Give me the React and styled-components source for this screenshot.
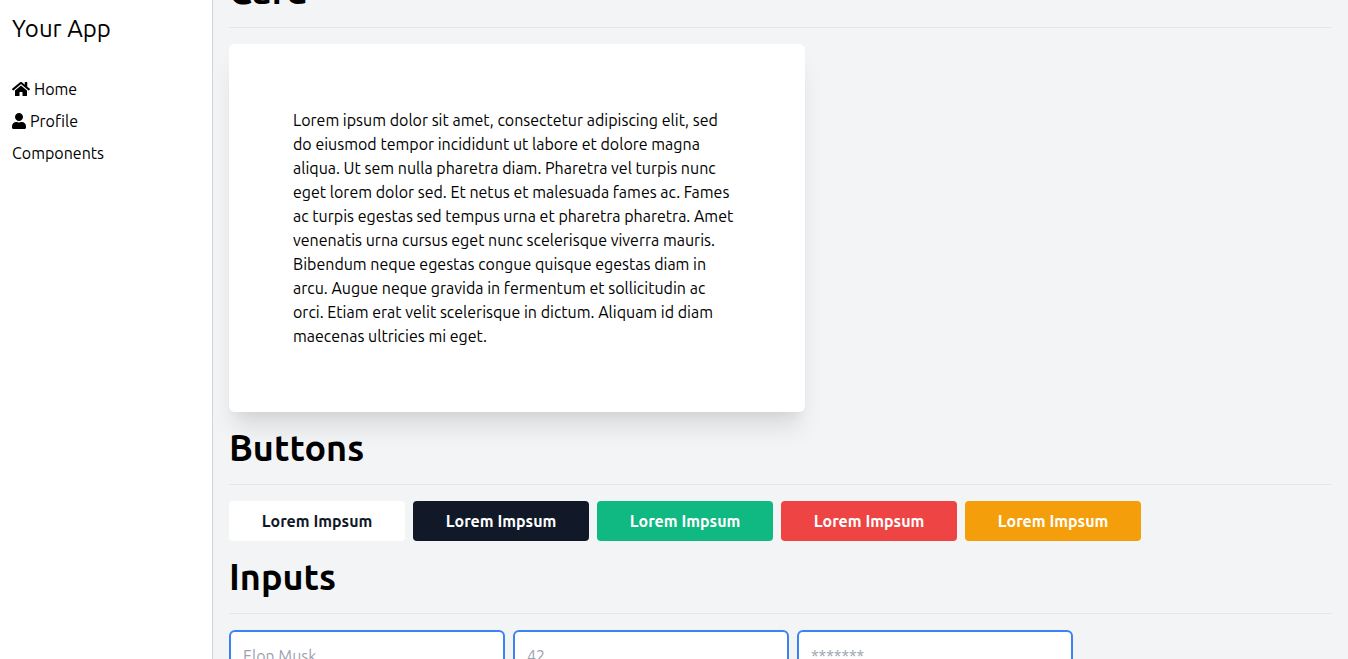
import React, { useLayoutEffect, useRef } from "react";
import styled, { createGlobalStyle } from "styled-components";
import { FaHome, FaUser } from "react-icons/fa";

const GlobalStyle = createGlobalStyle`
  *, *::before, *::after { box-sizing: border-box; }
  body {
    margin: 0;
    color: #000;
    font-family: Ubuntu, "Noto Sans", sans-serif;
    font-size: 16px;
    line-height: 24px;
  }
  h1, h2, p, ul { margin: 0; padding: 0; }
`;

const Shell = styled.div`
  display: flex;
  height: 100vh;
`;

const Sidebar = styled.aside`
  flex: 0 0 213px;
  padding: 12px;
  background: #fff;
  border-right: 1px solid #d1d5db;
`;

const Brand = styled.h1`
  font-size: 24px;
  font-weight: 400;
  line-height: 34px;
`;

const NavList = styled.ul`
  display: flex;
  flex-direction: column;
  gap: 8px;
  margin-top: 31px;
  list-style: none;
`;

const NavLink = styled.a`
  display: flex;
  align-items: center;
  gap: 4px;
  color: inherit;
  text-decoration: none;
`;

const HomeIcon = styled(FaHome)`
  width: 18px;
  height: 16px;
`;

const UserIcon = styled(FaUser)`
  width: 14px;
  height: 16px;
`;

const Main = styled.main`
  flex: 1;
  min-width: 0;
  padding: 16px;
  overflow-y: auto;
  scrollbar-width: none;
  background: #f3f4f6;
`;

const Section = styled.section`
  margin-bottom: 16px;
`;

const SectionTitle = styled.h2`
  margin-bottom: 16px;
  padding-bottom: 16px;
  border-bottom: 1px solid #e5e7eb;
  font-size: 36px;
  font-weight: 700;
  line-height: 40px;
`;

const Card = styled.article`
  max-width: 576px;
  padding: 64px;
  border-radius: 6px;
  background: #fff;
  box-shadow: 0 20px 25px -5px rgba(0, 0, 0, 0.1), 0 10px 10px -5px rgba(0, 0, 0, 0.04);
`;

const CardText = styled.p`
  max-width: 444px;
`;

const Row = styled.div`
  display: flex;
  flex-wrap: wrap;
  gap: 8px;
`;

const Button = styled.button`
  min-width: 176px;
  padding: 8px 32px;
  border: 0;
  border-radius: 4px;
  background: ${(p) => p.$bg};
  color: ${(p) => p.$color || "#fff"};
  font: inherit;
  font-weight: 700;
  cursor: pointer;
`;

const TextInput = styled.input`
  width: 276px;
  padding: 12px;
  border: 2px solid #3b82f6;
  border-radius: 6px;
  background: #fff;
  font: inherit;
  &::placeholder { color: #9ca3af; opacity: 1; }
`;

const BUTTONS = [
  { bg: "#fff", color: "#111827" },
  { bg: "#111827" },
  { bg: "#10b981" },
  { bg: "#ef4444" },
  { bg: "#f59e0b" },
];

const INITIAL_SCROLL = 45;

export default function App() {
  const mainRef = useRef(null);

  useLayoutEffect(() => {
    mainRef.current.scrollTop = INITIAL_SCROLL;
  }, []);

  return (
    <>
      <GlobalStyle />
      <Shell>
        <Sidebar>
          <Brand>Your App</Brand>
          <nav>
            <NavList>
              <li><NavLink href="#home"><HomeIcon aria-hidden="true" />Home</NavLink></li>
              <li><NavLink href="#profile"><UserIcon aria-hidden="true" />Profile</NavLink></li>
              <li><NavLink href="#components">Components</NavLink></li>
            </NavList>
          </nav>
        </Sidebar>
        <Main ref={mainRef}>
          <Section>
            <SectionTitle>Card</SectionTitle>
            <Card>
              <CardText>
                Lorem ipsum dolor sit amet, consectetur adipiscing elit, sed do eiusmod tempor
                incididunt ut labore et dolore magna aliqua. Ut sem nulla pharetra diam. Pharetra
                vel turpis nunc eget lorem dolor sed. Et netus et malesuada fames ac. Fames ac
                turpis egestas sed tempus urna et pharetra pharetra. Amet venenatis urna cursus
                eget nunc scelerisque viverra mauris. Bibendum neque egestas congue quisque
                egestas diam in arcu. Augue neque gravida in fermentum et sollicitudin ac orci.
                Etiam erat velit scelerisque in dictum. Aliquam id diam maecenas ultricies mi
                eget.
              </CardText>
            </Card>
          </Section>
          <Section>
            <SectionTitle>Buttons</SectionTitle>
            <Row>
              {BUTTONS.map((b) => (
                <Button key={b.bg} type="button" $bg={b.bg} $color={b.color}>Lorem Impsum</Button>
              ))}
            </Row>
          </Section>
          <Section>
            <SectionTitle>Inputs</SectionTitle>
            <Row>
              <TextInput type="text" aria-label="Name" placeholder="Elon Musk" />
              <TextInput type="number" aria-label="Number" placeholder="42" />
              <TextInput type="password" aria-label="Password" placeholder="*******" />
            </Row>
          </Section>
        </Main>
      </Shell>
    </>
  );
}
